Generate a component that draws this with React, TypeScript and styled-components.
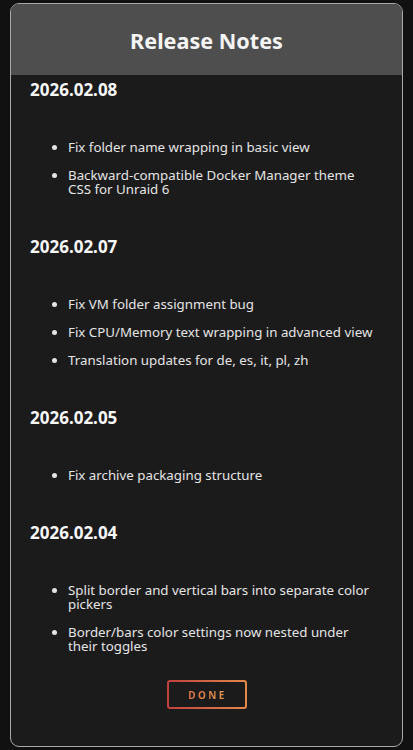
import * as React from "react";
import styled, { createGlobalStyle } from "styled-components";

type Release = {
  version: string;
  changes: string[];
};

const releases: Release[] = [
  {
    version: "2026.02.08",
    changes: [
      "Fix folder name wrapping in basic view",
      "Backward-compatible Docker Manager theme CSS for Unraid 6",
    ],
  },
  {
    version: "2026.02.07",
    changes: [
      "Fix VM folder assignment bug",
      "Fix CPU/Memory text wrapping in advanced view",
      "Translation updates for de, es, it, pl, zh",
    ],
  },
  {
    version: "2026.02.05",
    changes: ["Fix archive packaging structure"],
  },
  {
    version: "2026.02.04",
    changes: [
      "Split border and vertical bars into separate color pickers",
      "Border/bars color settings now nested under their toggles",
    ],
  },
];

const GlobalStyle = createGlobalStyle`
  html, body {
    margin: 0;
    background: #111111;
  }
  body {
    font-family: "Noto Sans", "Open Sans", sans-serif;
    color: #e6e6e6;
  }
`;

const Page = styled.div`
  padding: 3px 10px 2px 10px;
`;

const Modal = styled.div`
  display: flex;
  flex-direction: column;
  border: 1px solid #a9a9a9;
  border-radius: 9px;
  overflow: hidden;
  background: #1c1b1c;
`;

const Header = styled.div`
  height: 71px;
  display: flex;
  align-items: center;
  justify-content: center;
  background: #4e4e4e;
`;

const Title = styled.h2`
  margin: 0 0 -1px 0;
  font-size: 21.6px;
  font-weight: 700;
  color: #f4f4f4;
`;

const Body = styled.div`
  display: flex;
  flex-direction: column;
  padding: 5px 0 37px 0;
`;

const Notes = styled.div`
  display: flex;
  flex-direction: column;
  gap: 41px;
  padding: 0 26px 0 19px;
`;

const Entry = styled.section`
  display: flex;
  flex-direction: column;
  gap: 40px;
`;

const Version = styled.h3`
  margin: 0;
  font-size: 17px;
  line-height: 20px;
  font-weight: 700;
  color: #f7f7f7;
`;

const ChangeList = styled.ul`
  margin: 0;
  padding-left: 38px;
  display: flex;
  flex-direction: column;
  gap: 14px;
`;

const Change = styled.li`
  font-size: 13.3px;
  line-height: 14px;
  color: #e4e4e4;
`;

const Footer = styled.div`
  display: flex;
  justify-content: center;
  margin-top: 27px;
`;

const DoneButton = styled.button`
  width: 80px;
  height: 29px;
  border: 2px solid transparent;
  border-radius: 3px;
  background:
    linear-gradient(#1c1b1c, #1c1b1c) padding-box,
    linear-gradient(90deg, #c1403e, #e38a4b) border-box;
  font-family: "Noto Sans", sans-serif;
  font-size: 10px;
  font-weight: 700;
  letter-spacing: 2.4px;
  padding: 0 0 0 2px;
  cursor: pointer;
`;

const DoneLabel = styled.span`
  background: linear-gradient(90deg, #d9744a, #e59552);
  -webkit-background-clip: text;
  background-clip: text;
  color: transparent;
`;

const App = () => {
  return (
    <>
      <GlobalStyle />
      <Page>
        <Modal>
          <Header>
            <Title>Release Notes</Title>
          </Header>
          <Body>
            <Notes>
              {releases.map((release) => (
                <Entry key={release.version}>
                  <Version>{release.version}</Version>
                  <ChangeList>
                    {release.changes.map((change) => (
                      <Change key={change}>{change}</Change>
                    ))}
                  </ChangeList>
                </Entry>
              ))}
            </Notes>
            <Footer>
              <DoneButton>
                <DoneLabel>DONE</DoneLabel>
              </DoneButton>
            </Footer>
          </Body>
        </Modal>
      </Page>
    </>
  );
};

export default App;
